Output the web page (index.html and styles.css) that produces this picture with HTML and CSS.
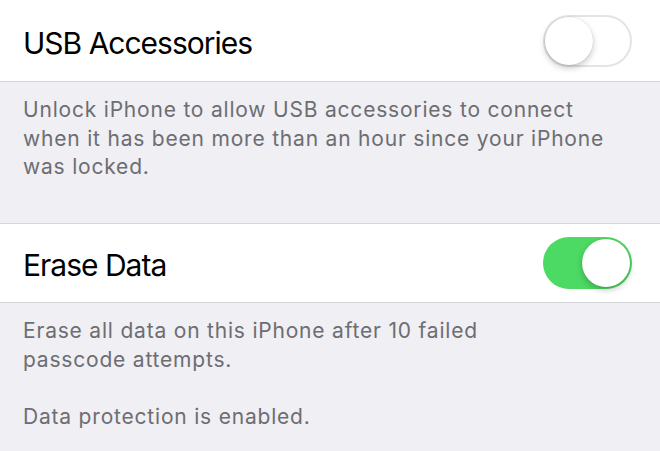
FILE: index.html
```html
<!DOCTYPE html>
<html lang="en">
<head>
    <meta charset="UTF-8">
    <meta name="viewport" content="width=device-width, initial-scale=1.0">
    <title>Passcode settings</title>
    <link rel="stylesheet" href="styles.css">
</head>
<body>
    <div class="row first">
        <span class="label">USB Accessories</span>
        <span class="switch"><span class="knob"></span></span>
    </div>
    <div class="note">
        <p>Unlock iPhone to allow USB accessories to connect<br>when it has been more than an hour since your iPhone<br>was locked.</p>
    </div>
    <div class="row second">
        <span class="label">Erase Data</span>
        <span class="switch on"><span class="knob"></span></span>
    </div>
    <div class="note">
        <p>Erase all data on this iPhone after 10 failed<br>passcode attempts.</p>
        <p>Data protection is enabled.</p>
    </div>
</body>
</html>
```

FILE: styles.css
```css
body{
    margin: 0;
    background-color: #efeff4;
    font-family: Inter, "Liberation Sans", sans-serif;
}
.row{
    display: flex;
    align-items: center;
    justify-content: space-between;
    height: 78px;
    padding: 0 28px 0 23px;
    background-color: #fff;
    border-bottom: 1px solid #d6d6da;
}
.row.first{
    height: 81px;
}
.row.second{
    border-top: 1px solid #d6d6da;
}
.label{
    padding-top: 4px;
    font-size: 30px;
    letter-spacing: -1px;
    color: #000;
}
.note{
    height: 127px;
    padding: 14px 20px 0 23px;
    font-size: 21px;
    line-height: 28.5px;
    letter-spacing: 0.8px;
    white-space: nowrap;
    color: #6d6d72;
}
.note p{
    margin: 0 0 28.5px;
}
.switch{
    display: flex;
    box-sizing: border-box;
    width: 89px;
    height: 52px;
    padding: 2px;
    border-radius: 26px;
    background-color: #fff;
    box-shadow: inset 0 0 0 2px #e4e4e8;
}
.switch.on{
    justify-content: flex-end;
    background-color: #4cd964;
    box-shadow: none;
}
.knob{
    width: 48px;
    height: 48px;
    border-radius: 50%;
    background-color: #fff;
    box-shadow: 0 3px 6px rgba(0, 0, 0, 0.22), 0 0 0 0.5px rgba(0, 0, 0, 0.08);
}
```
